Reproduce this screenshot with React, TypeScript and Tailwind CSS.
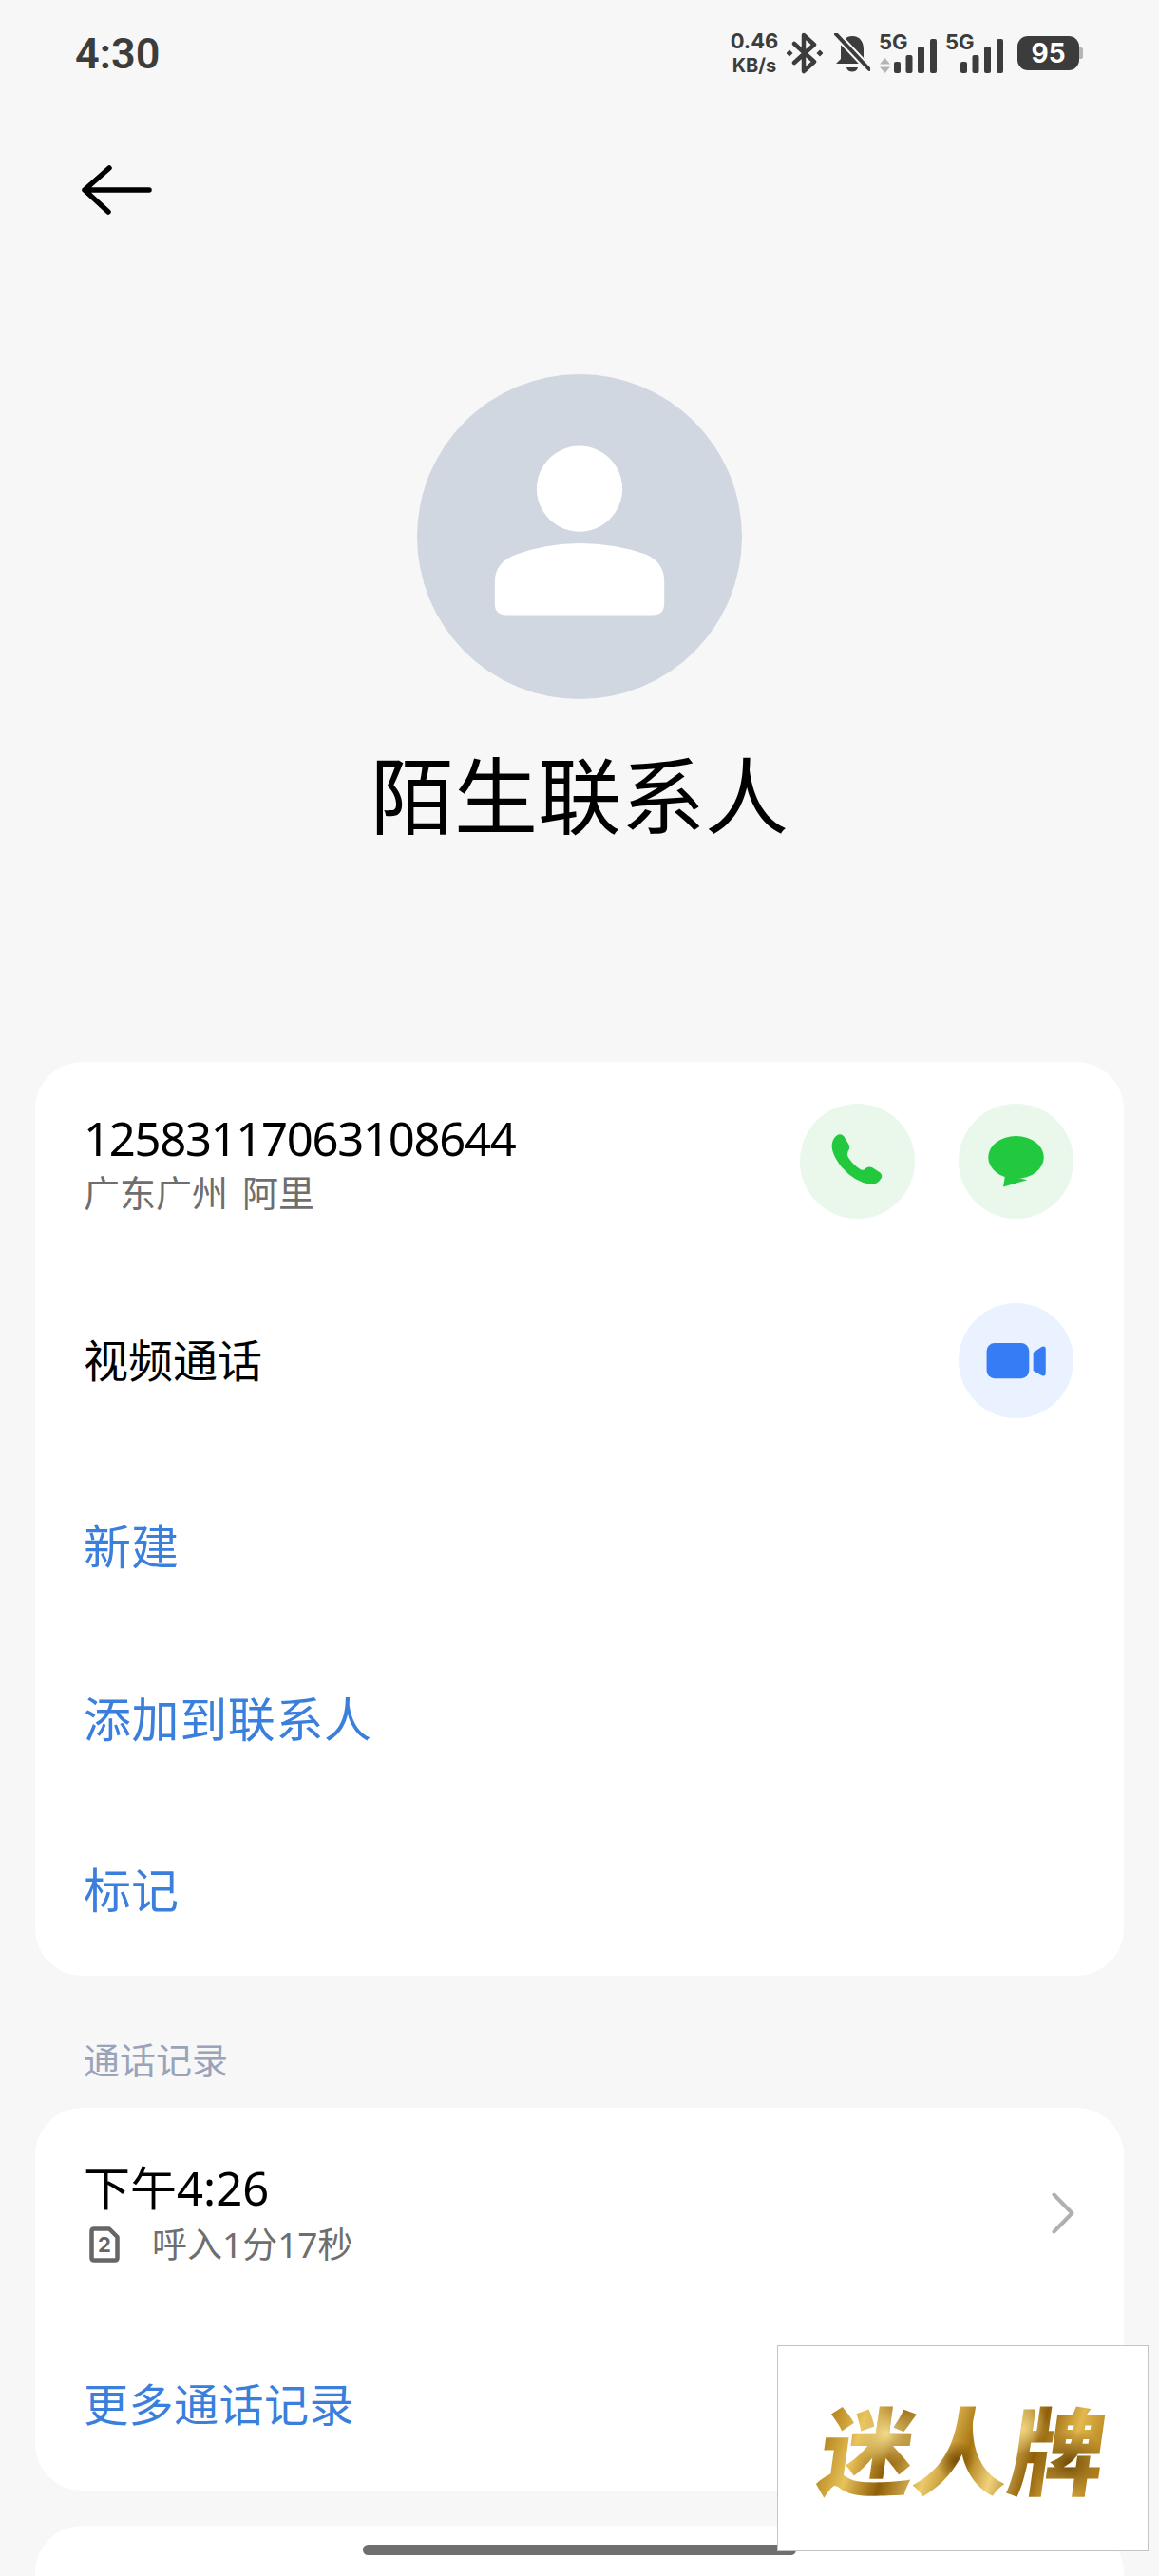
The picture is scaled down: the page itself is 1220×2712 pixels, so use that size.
import type { ReactNode } from "react";

function Bars({ className }: { className?: string }) {
  return (
    <svg width="45" height="36" viewBox="0 0 45 36" className={className} fill="#3c3c3c">
      <rect x="0" y="24" width="7" height="12" rx="2" />
      <rect x="12.500" y="17" width="7" height="19" rx="2" />
      <rect x="25" y="8" width="7" height="28" rx="2" />
      <rect x="38" y="0" width="7" height="36" rx="2" />
    </svg>
  );
}

function StatusBar() {
  return (
    <div className="flex h-[112px] items-center justify-between pl-[79px] pr-[80px]">
      <span className="font-['Roboto',sans-serif] text-[45px] font-semibold leading-none text-[#3c3c3c]">4:30</span>
      <div className="flex items-center font-['Inter',sans-serif] font-bold text-[#3c3c3c]">
        <div className="flex w-[50px] flex-col items-center text-[22px] leading-[26px]">
          <span>0.46</span>
          <span className="text-[20px]">KB/s</span>
        </div>
        <svg width="38" height="44" viewBox="0 0 38 44" className="ml-[9px]" fill="none" stroke="#3c3c3c" strokeWidth="4.500">
          <path d="M8 12 L29 31 L18 41 L18 3 L29 13 L8 32" strokeLinejoin="round" strokeLinecap="round" />
          <rect x="0.500" y="19.500" width="5" height="5" fill="#3c3c3c" stroke="none" transform="rotate(45 3 22)" />
          <rect x="32.500" y="19.500" width="5" height="5" fill="#3c3c3c" stroke="none" transform="rotate(45 35 22)" />
        </svg>
        <svg width="38" height="42" viewBox="0 0 38 42" className="ml-[12px]">
          <path d="M19 3 C28 3 31 10 31 17 L31 26 L36 32 L2 32 L7 27 L7 15 C7 9 12 3 19 3 Z" fill="#3c3c3c" />
          <path d="M13 36 H25 C24 42 14 42 13 36 Z" fill="#3c3c3c" />
          <path d="M3 2 L37 38" stroke="#f7f7f7" strokeWidth="8" />
          <path d="M2 1 L37 38" stroke="#3c3c3c" strokeWidth="4" strokeLinecap="round" />
        </svg>
        <div className="relative ml-[9px] h-[42px] w-[61px]">
          <span className="absolute left-0 top-[-3px] text-[22px] leading-[24px]">5G</span>
          <svg width="11" height="16" viewBox="0 0 11 16" className="absolute bottom-0 left-[1px]" fill="#b4b4b4">
            <path d="M5.500 0 L11 6.500 H0 Z M0 9.500 H11 L5.500 16 Z" />
          </svg>
          <Bars className="absolute bottom-0 right-0 h-[36px] w-[45px]" />
        </div>
        <div className="relative ml-[9px] h-[42px] w-[61px]">
          <span className="absolute left-0 top-[-3px] text-[22px] leading-[24px]">5G</span>
          <Bars className="absolute bottom-0 right-0 h-[36px] w-[45px]" />
        </div>
        <div className="ml-[15px] flex items-center">
          <div className="flex h-[36px] w-[65px] items-center justify-center rounded-[11px] bg-[#3c3c3c] text-[28px] leading-none text-white">95</div>
          <div className="h-[12px] w-[4px] rounded-r-[2px] bg-[#b5b5b5]" />
        </div>
      </div>
    </div>
  );
}

function RoundIcon({ bg, children }: { bg: string; children: ReactNode }) {
  return <div className={`flex h-[121px] w-[121px] items-center justify-center rounded-full ${bg}`}>{children}</div>;
}

function PhoneIcon() {
  return (
    <svg width="121" height="121" viewBox="190 127 360 360" fill="#22c93f">
      <path d="M310 224 Q320 220 328 230 L345 258 Q348 268 340 278 Q336 286 342 296 Q358 320 380 333 Q390 338 398 328 Q408 322 418 328 L440 342 Q450 350 445 360 Q432 382 412 380 Q360 372 320 325 Q285 280 291 250 Q295 232 310 224 Z" />
    </svg>
  );
}

function MessageIcon() {
  return (
    <svg width="121" height="121" viewBox="690 127 360 360" fill="#22c93f">
      <ellipse cx="870" cy="295" rx="87" ry="67" />
      <path d="M836 350 L830 387 L905 366 Z" />
    </svg>
  );
}

function VideoIcon() {
  return (
    <svg width="121" height="121" viewBox="690 757 360 360" fill="#367cf5">
      <rect x="778" y="882" width="133" height="111" rx="25" />
      <path d="M924 912 L950 894 Q963 888 963 902 L963 975 Q963 989 950 983 L924 968 Z" />
    </svg>
  );
}

function SimBadge() {
  return (
    <div className="relative ml-[6px] flex h-[38px] w-[32px] items-center justify-center font-['Inter',sans-serif] text-[22px] font-bold leading-none text-[#666]">
      <svg width="32" height="38" viewBox="0 0 32 38" className="absolute inset-0" fill="none" stroke="#666" strokeWidth="4.500" strokeLinejoin="round">
        <path d="M5 2.500 H21 L29.500 11 V33 Q29.500 35.500 27 35.500 H5 Q2.500 35.500 2.500 33 V5 Q2.500 2.500 5 2.500 Z" />
      </svg>
      2
    </div>
  );
}

function LinkRow({ label, className }: { label: string; className: string }) {
  return (
    <div className={`flex items-center pl-[51px] text-[#3a7fdc] ${className}`}>{label}</div>
  );
}

export default function App() {
  return (
    <div className="relative h-[2712px] w-[1220px] overflow-hidden bg-[#f7f7f7] font-['Noto_Sans','Noto_Sans_CJK_SC',sans-serif]">
      <StatusBar />

      <div className="flex h-[176px] items-center pl-[86px]">
        <svg width="76" height="54" viewBox="0 0 76 54" fill="none" stroke="#000" strokeWidth="5.500" strokeLinecap="round" strokeLinejoin="round">
          <path d="M3 27 H71 M29 4 L3 27 L28 50" />
        </svg>
      </div>

      <div className="mt-[-106px] flex flex-col items-center">
        <div className="mt-[212px] h-[342px] w-[342px]">
          <svg width="342" height="342" viewBox="118 72 1024 1024">
            <circle cx="630" cy="584" r="512" fill="#d1d7e0" />
            <circle cx="630" cy="433" r="135" fill="#fff" />
            <path d="M430 640 Q530 605 630 605 Q740 605 840 640 Q897 665 897 725 L897 795 Q897 831 860 831 L400 831 Q363 831 363 795 L363 725 Q363 665 430 640 Z" fill="#fff" />
          </svg>
        </div>
        <h1 className="mt-[49px] text-[88px] font-normal leading-[104px] text-black">陌生联系人</h1>
      </div>

      <div className="mx-[37px] mt-[229px] rounded-[50px] bg-white">
        <div className="flex h-[209px] items-center justify-between pl-[51px] pr-[53px]">
          <div className="flex flex-col pt-[8px]">
            <span className="text-[49px] leading-[57px] tracking-[-1.300px] text-black">12583117063108644</span>
            <span className="text-[38px] leading-[57px] text-[#6e6e6e] [word-spacing:5px]">广东广州 阿里</span>
          </div>
          <div className="flex gap-[46px]">
            <RoundIcon bg="bg-[#e9f8eb]"><PhoneIcon /></RoundIcon>
            <RoundIcon bg="bg-[#e9f8eb]"><MessageIcon /></RoundIcon>
          </div>
        </div>
        <div className="flex h-[210px] items-center justify-between pl-[51px] pr-[53px]">
          <span className="text-[47px] text-black">视频通话</span>
          <RoundIcon bg="bg-[#e9f2fe]"><VideoIcon /></RoundIcon>
        </div>
        <LinkRow label="新建" className="h-[182px] text-[50px]" />
        <LinkRow label="添加到联系人" className="h-[182px] text-[50px] tracking-[0.600px]" />
        <LinkRow label="标记" className="h-[179px] text-[50px]" />
      </div>

      <div className="flex h-[139px] items-center pl-[88px] pt-[37px] text-[38px] text-[#9aa3b8]">通话记录</div>

      <div className="mx-[37px] rounded-[50px] bg-white">
        <div className="flex h-[222px] items-center justify-between pl-[51px] pr-[52px]">
          <div className="flex flex-col pt-[6px]">
            <span className="text-[49px] leading-[60px] text-black">下午4:26</span>
            <div className="flex items-center text-[37px] leading-[60px] text-[#6e6e6e]">
              <SimBadge />
              <span className="ml-[34px]">呼入1分17秒</span>
            </div>
          </div>
          <svg width="24" height="44" viewBox="0 0 24 44" fill="none" stroke="#b0b0b0" strokeWidth="4" strokeLinecap="round" strokeLinejoin="round">
            <path d="M2.500 2.500 L21.500 22 L2.500 41.500" />
          </svg>
        </div>
        <LinkRow label="更多通话记录" className="h-[181px] text-[47px] tracking-[0.500px]" />
      </div>

      <div className="mx-[37px] mt-[37px] h-[200px] rounded-t-[50px] bg-white" />

      <div className="absolute left-[382px] top-[2679px] h-[11px] w-[456px] rounded-full bg-[#6f6f6f]" />

      <div className="absolute left-[818px] top-[2469px] flex h-[217px] w-[391px] items-center justify-center border border-[#c4c4c4] bg-white">
        <span className="-skew-x-[8deg] bg-[radial-gradient(circle_at_22%_35%,#f4dc8a_0,transparent_14%),radial-gradient(circle_at_48%_62%,#7a4f06_0,transparent_12%),radial-gradient(circle_at_70%_30%,#f0d27c_0,transparent_12%),radial-gradient(circle_at_88%_65%,#6f4805_0,transparent_13%),linear-gradient(100deg,#a8740f_0%,#e8c25a_14%,#8f5f08_26%,#eccb6c_40%,#a8760f_52%,#f0d27c_62%,#8f5f08_74%,#e3b84e_86%,#a8740f_100%)] bg-clip-text pb-[4px] font-['Noto_Sans_CJK_SC',sans-serif] text-[100px] font-black leading-none text-transparent">
          迷人牌
        </span>
      </div>
    </div>
  );
}
